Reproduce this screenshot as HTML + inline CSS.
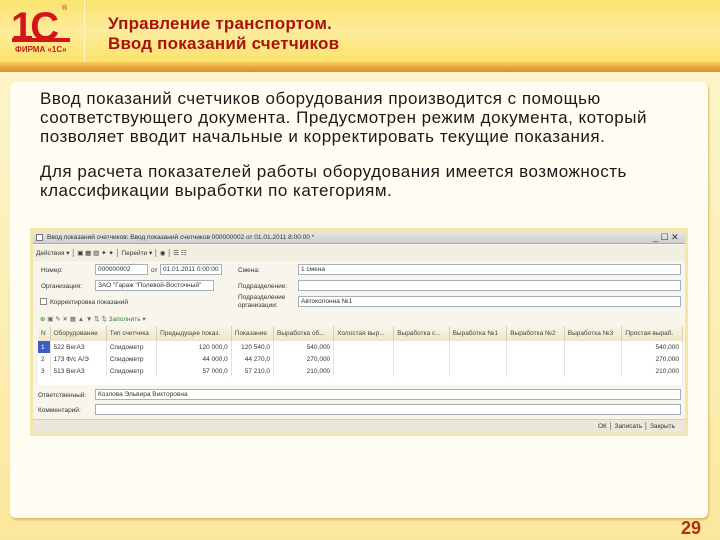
<!DOCTYPE html>
<html><head><meta charset="utf-8"><style>
*{margin:0;padding:0;box-sizing:border-box}
body{width:720px;height:540px;overflow:hidden;position:relative;font-family:"Liberation Sans",sans-serif;background:linear-gradient(#fdf6cf 0%,#fcefb4 60%,#fbe79c 100%)}
.hdr{position:absolute;left:0;top:0;width:720px;height:62px;background:linear-gradient(#fbe36f 0%,#fcec9c 50%,#fbe36c 100%)}
.bar{position:absolute;left:0;top:62px;width:720px;height:10px;background:linear-gradient(#f6cf5a,#e5a23a 60%,#d98f2a)}
.sep{position:absolute;left:84px;top:0;width:1px;height:62px;background:#fff6c0}
.title{position:absolute;left:108px;top:14px;color:#a8120e;font-weight:bold;font-size:17px;line-height:20px;letter-spacing:0.2px}
.logo1{position:absolute;left:11px;top:7px;color:#d3151b;font-weight:bold;font-size:40px;line-height:40px;letter-spacing:-3px}
.firma{position:absolute;left:15px;top:45px;color:#c21a1a;font-weight:bold;font-size:8px}
.panel{position:absolute;left:10px;top:82px;width:698px;height:436px;background:#fffcf1;border-radius:6px;box-shadow:1px 2px 2px #d8b870}
.txt{position:absolute;left:40px;color:#1a1a1a;font-size:17px;line-height:19px;letter-spacing:0.5px}
.num{position:absolute;left:681px;top:518px;color:#b3300f;font-weight:bold;font-size:18px}
.sc{position:absolute;left:30px;top:228px;width:658px;height:208px;background:#f4e6a8;padding:3px}
.win{position:relative;width:652px;height:202px;background:#f7f5ec;font-size:6.5px;color:#333;overflow:hidden}
.a{position:absolute;white-space:nowrap}
.in{position:absolute;background:#fff;border:1px solid #a8b0b8;height:11px;font-size:6.5px;padding-left:2px;line-height:9px}
table{border-collapse:collapse;position:absolute;left:5px;top:95px;width:645px;font-size:6.5px}
th{background:linear-gradient(#fbf7e8,#ece5c8);font-weight:normal;text-align:left;height:15px;border-right:1px solid #d8d0b0;padding-left:3px;color:#444}
td{height:12px;border-right:1px solid #e4e4e4;padding:0 3px;background:#fff}
td.r{text-align:right}
</style></head><body>
<div class="hdr"></div><div class="bar"></div><div class="sep"></div>
<div class="logo1">1С</div>
<div style="position:absolute;left:12px;top:38px;width:58px;height:4px;background:#d3151b"></div>
<div style="position:absolute;left:62px;top:5px;font-size:7px;color:#c21a1a">®</div>
<div class="firma">ФИРМА «1С»</div>
<div class="title">Управление транспортом.<br>Ввод показаний счетчиков</div>
<div class="panel"></div>
<div class="txt" style="top:89px">Ввод показаний счетчиков оборудования производится с помощью<br>соответствующего документа. Предусмотрен режим документа, который<br>позволяет вводит начальные и корректировать текущие показания.</div>
<div class="txt" style="top:162px">Для расчета показателей работы оборудования имеется возможность<br>классификации выработки по категориям.</div>
<div class="sc"><div class="win">
<div class="a" style="left:0;top:0;width:652px;height:13px;background:linear-gradient(#e8e8e8,#cfcfcf);border-bottom:1px solid #aaa"></div>
<div class="a" style="left:3px;top:3px;width:7px;height:7px;border:1px solid #777;background:#fff"></div>
<div class="a" style="left:14px;top:3px">Ввод показаний счетчиков: Ввод показаний счетчиков 000000002 от 01.01.2011 8:00:00 *</div>
<div class="a" style="left:620px;top:1px;font-size:9px">_ ☐ ✕</div>
<div class="a" style="left:0;top:14px;width:652px;height:16px;background:#f3efe0"></div>
<div class="a" style="left:3px;top:18px">Действия ▾ │ ▣ ▦ ▧ ✦ ✦ │ Перейти ▾ │ ◉ │ ☰ ☷</div>
<div class="a" style="left:8px;top:36px">Номер:</div><div class="in" style="left:62px;top:33px;width:53px">000000002</div>
<div class="a" style="left:118px;top:36px">от</div><div class="in" style="left:127px;top:33px;width:62px">01.01.2011 0:00:00</div>
<div class="a" style="left:205px;top:36px">Смена:</div><div class="in" style="left:265px;top:33px;width:383px">1 смена</div>
<div class="a" style="left:8px;top:52px">Организация:</div><div class="in" style="left:62px;top:49px;width:119px">ЗАО "Гараж "Полевой-Восточный"</div>
<div class="a" style="left:205px;top:52px">Подразделение:</div><div class="in" style="left:265px;top:49px;width:383px"></div>
<div class="a" style="left:7px;top:67px;width:7px;height:7px;border:1px solid #888;background:#fff"></div>
<div class="a" style="left:17px;top:68px">Корректировка показаний</div>
<div class="a" style="left:205px;top:63px;line-height:8px">Подразделение<br>организации:</div><div class="in" style="left:265px;top:65px;width:383px">Автоколонна №1</div>
<div class="a" style="left:7px;top:84px;color:#2a8a2a">⊕ <span style="color:#666">▣ ✎</span> <span style="color:#c22">✕</span> <span style="color:#666">▦ ▲ ▼ ⇅ ⇅</span> Заполнить ▾</div>
<table><tr><th style="width:12px">N</th><th>Оборудование</th><th>Тип счетчика</th><th>Предыдущее показ.</th><th>Показание</th><th>Выработка об...</th><th>Холостая выр...</th><th>Выработка с...</th><th>Выработка №1</th><th>Выработка №2</th><th>Выработка №3</th><th>Простая выраб.</th></tr>
<tr><td style="background:#3c5cc8;color:#fff">1</td><td>522 ВегАЗ</td><td>Спидометр</td><td class="r">120 000,0</td><td class="r">120 540,0</td><td class="r">540,000</td><td></td><td></td><td></td><td></td><td></td><td class="r">540,000</td></tr>
<tr><td>2</td><td>173 Ф/с А/Э</td><td>Спидометр</td><td class="r">44 000,0</td><td class="r">44 270,0</td><td class="r">270,000</td><td></td><td></td><td></td><td></td><td></td><td class="r">270,000</td></tr>
<tr><td>3</td><td>513 ВегАЗ</td><td>Спидометр</td><td class="r">57 000,0</td><td class="r">57 210,0</td><td class="r">210,000</td><td></td><td></td><td></td><td></td><td></td><td class="r">210,000</td></tr>
<tr><td colspan="12" style="height:8px;background:#fff"></td></tr></table>
<div class="a" style="left:5px;top:161px">Ответственный:</div><div class="in" style="left:62px;top:158px;width:586px">Козлова Эльвира Викторовна</div>
<div class="a" style="left:5px;top:176px">Комментарий:</div><div class="in" style="left:62px;top:173px;width:586px"></div>
<div class="a" style="left:0;top:188px;width:652px;height:14px;background:#ece8d8;border-top:1px solid #ccc"></div>
<div class="a" style="left:565px;top:192px">ОК │ Записать │ Закрыть</div>
</div></div>
<div class="num">29</div>
</body></html>
